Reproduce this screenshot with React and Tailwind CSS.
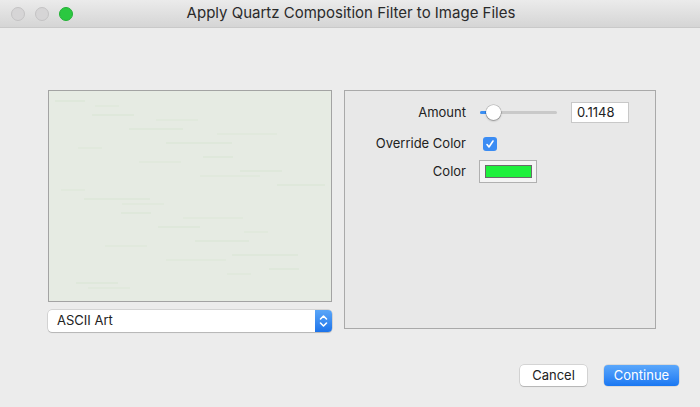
import React from "react";

const font = { fontFamily: "Inter, 'Liberation Sans', sans-serif" };

const TrafficLights = () => (
  <div className="flex items-center gap-[10px] pl-[11px]">
    <div className="h-[14px] w-[14px] rounded-full bg-[#d6d5d6] border border-[#c4c3c4]" />
    <div className="h-[14px] w-[14px] rounded-full bg-[#d6d5d6] border border-[#c4c3c4]" />
    <div className="h-[14px] w-[14px] rounded-full bg-[#2bc840] border border-[#22b135]" />
  </div>
);

const Preview = () => (
  <div className="h-[212px] w-[284px] border border-[#a3a3a3] bg-[#e6ebe3] p-[6px]">
    {/* faint ascii-art texture */}
    <svg width="270" height="198" className="block">
      {[...Array(14)].map((_, i) => (
        <g key={i}>
          <rect x={(i * 37) % 230} y={i * 14 + 3} width={30 + (i % 4) * 12} height="2" fill="#dfe8db" />
          <rect x={(i * 61 + 40) % 200} y={i * 14 + 8} width={24 + (i % 3) * 18} height="2" fill="#e1e9dd" />
        </g>
      ))}
    </svg>
  </div>
);

const Popup = () => (
  <div className="mt-[8px] flex h-[22px] w-[284px] items-center rounded-[4px] bg-white shadow-[0_0_0_0.5px_rgba(0,0,0,0.2),0_1px_1px_rgba(0,0,0,0.15)]">
    <span className="flex-1 pl-[9px] text-[13px] text-[#222]">ASCII Art</span>
    <div className="flex h-full w-[17px] items-center justify-center rounded-r-[4px] bg-gradient-to-b from-[#5aa6f8] to-[#1b73ea]">
      <svg width="9" height="14" viewBox="0 0 9 14" fill="none" stroke="white" strokeWidth="1.6" strokeLinecap="round" strokeLinejoin="round">
        <path d="M1.5 5 L4.5 2 L7.5 5" />
        <path d="M1.5 9 L4.5 12 L7.5 9" />
      </svg>
    </div>
  </div>
);

const Slider = () => (
  <div className="relative h-[21px] w-[77px]">
    <div className="absolute left-0 top-[9px] h-[3px] w-[77px] rounded-full bg-[#c9c9c9]" />
    <div className="absolute left-0 top-[9px] h-[3px] w-[12px] rounded-full bg-[#3a8ff4]" />
    <div className="absolute left-[6px] top-[3px] h-[15px] w-[15px] rounded-full bg-white shadow-[0_0_0_0.5px_rgba(0,0,0,0.25),0_1px_2px_rgba(0,0,0,0.3)]" />
  </div>
);

const Settings = () => (
  <div className="h-[239px] w-[312px] border border-[#a9a9a9] bg-[#e8e8e8] pt-[11px] text-[13px] text-[#222]">
    <div className="flex h-[21px] items-center">
      <span className="w-[121px] text-right">Amount</span>
      <div className="ml-[14px]">
        <Slider />
      </div>
      <div className="ml-[14px] flex h-[21px] w-[58px] items-center border border-[#c8c8c8] bg-white pl-[5px]">
        0.1148
      </div>
    </div>
    <div className="mt-[11px] flex h-[20px] items-center">
      <span className="w-[121px] text-right">Override Color</span>
      <div className="ml-[17px] flex h-[14px] w-[14px] items-center justify-center rounded-[3px] bg-[#3b8cf3]">
        <svg width="10" height="10" viewBox="0 0 10 10" fill="none" stroke="white" strokeWidth="1.6" strokeLinecap="round" strokeLinejoin="round">
          <path d="M2 5.5 L4 8 L8 2" />
        </svg>
      </div>
    </div>
    <div className="mt-[6px] flex h-[23px] items-center">
      <span className="w-[121px] text-right">Color</span>
      <div className="ml-[13px] flex h-[23px] w-[58px] items-center justify-center border border-[#b0b0b0] bg-[#f4f4f4]">
        <div className="h-[13px] w-[47px] border border-[#6a6a6a] bg-[#1ef03c]" />
      </div>
    </div>
  </div>
);

export default function App() {
  return (
    <div className="h-[407px] w-[700px] overflow-hidden bg-[#ececec]" style={font}>
      <div className="relative flex h-[28px] items-center border-b border-[#c9c9c9] bg-gradient-to-b from-[#ebebeb] to-[#d5d5d5]">
        <TrafficLights />
        <div className="absolute inset-0 flex items-center justify-center pl-[2px] text-[15px] text-[#2a2a2a]">
          Apply Quartz Composition Filter to Image Files
        </div>
      </div>
      <div className="flex gap-[12px] pl-[48px] pt-[62px]">
        <div>
          <Preview />
          <Popup />
        </div>
        <Settings />
      </div>
      <div className="mt-[33px] flex justify-end gap-[17px] pr-[21px]">
        <button className="h-[21px] w-[67px] rounded-[4px] bg-white text-[13px] text-[#222] shadow-[0_0_0_0.5px_rgba(0,0,0,0.2),0_1px_1px_rgba(0,0,0,0.15)]">
          Cancel
        </button>
        <button className="h-[21px] w-[75px] rounded-[4px] bg-gradient-to-b from-[#5aa7fb] to-[#1877f2] text-[13px] text-white shadow-[0_0_0_0.5px_rgba(0,0,0,0.15)]">
          Continue
        </button>
      </div>
    </div>
  );
}
